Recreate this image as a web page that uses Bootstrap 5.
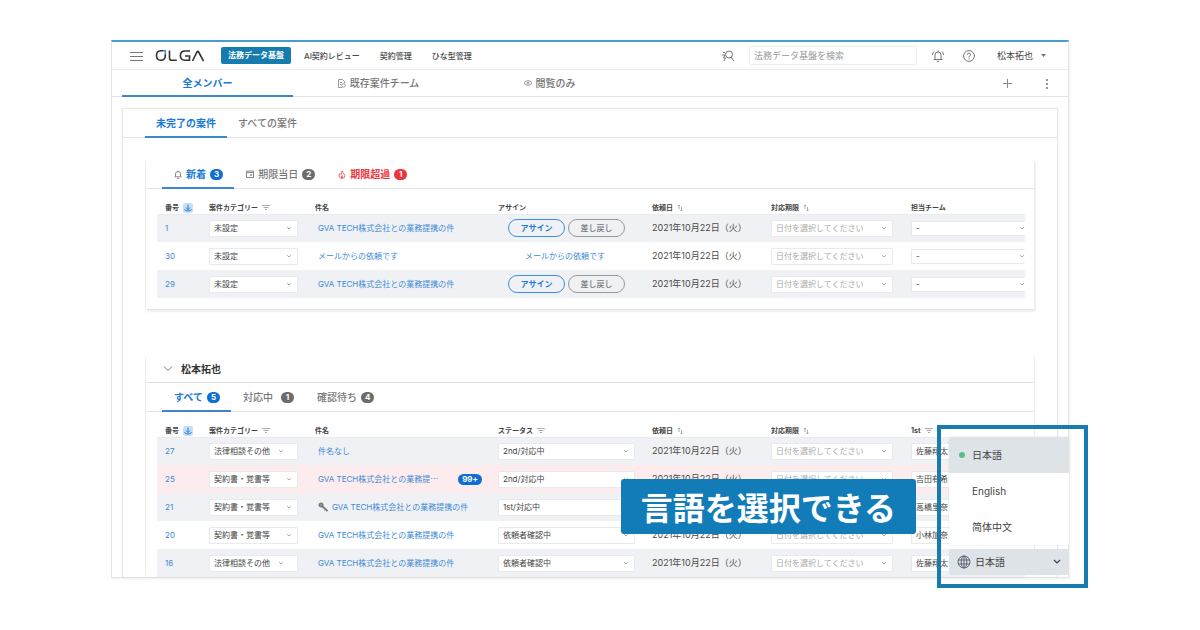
<!DOCTYPE html>
<html lang="ja">
<head>
<meta charset="utf-8">
<meta name="viewport" content="width=device-width, initial-scale=1">
<title>OLGA 法務データ基盤</title>
<link href="https://cdn.jsdelivr.net/npm/bootstrap@5.3.0/dist/css/bootstrap.min.css" rel="stylesheet">
<style>
:root{--blue:#1a7ad9;--line:#e2e4e7;--brand:#167cb0}
body{font-family:Inter,"Noto Sans CJK JP",sans-serif;font-size:8px;line-height:12px;color:#4a4a4a;background:#fff}
svg{display:block;flex:none}
a{text-decoration:none;color:inherit}
button{font-family:inherit}
.page{padding:40px 131px 40px 111px}
.app{border:1px solid var(--line);border-top:2px solid #459dd3;box-shadow:1px 1px 3px #0001}
.topbar{height:28px;border-bottom:1px solid #ececee;padding:0 22px 0 18px;font-weight:500}
.iconbtn{border:0;background:none;padding:0;color:#777}
.chip{background:var(--brand);color:#fff;border-radius:2px;padding:2px 7px;height:17px;line-height:13px;font-weight:700}
.menus{gap:20px;margin-left:16px}
.menus .chip{margin-right:-7px}
.finder{width:168px;height:19px;min-height:0;border:1px solid #eee;border-radius:1px;font-size:9px;padding:0 4px;line-height:17px}
.finder::placeholder{color:#999}
.tools{gap:15px}
.user{font-size:9px;color:#444;margin-left:7px}
.tabline{border-bottom:1px solid var(--line);font-size:10px;line-height:14px;font-weight:500;color:#777}
.tabline .nav-link{color:inherit;border-bottom:2px solid transparent;border-radius:0;padding:0 11px;display:flex;align-items:center;gap:4px;margin-bottom:-1px}
.tabline .nav-link.active{color:var(--blue);border-color:#3b87cb;font-weight:700}
.tabline .nav-link.late{color:#f0353d;font-weight:700}
.teams{height:27px;padding:0 10px}
.teams .nav-link{width:171px;justify-content:center;padding-top:1px}
.inset{height:29px;padding:0 22px}
.counts{padding:0 16px}
.counts .nav-link{padding:1px 11px 0 12px}
.sheet{margin:11px 10px 0;border:1px solid #e6e7e9;border-bottom:0;box-shadow:0 0 2px #0001}
.panel{margin:0 22px;border:1px solid #eceded;border-top:0;border-bottom:0;border-radius:2px}
.panel-shut{border-bottom:1px solid #e4e5e6;padding-bottom:11px;box-shadow:1px 2px 2px #0001}
.fresh{margin-top:22px}
.mine{margin-top:46px}
.pill{--bs-badge-font-size:8px;--bs-badge-padding-x:4px;--bs-badge-padding-y:1px;line-height:9px;min-width:13px;background:#6c6c6c}
.active .pill,.pill.on{background:#0f6fd0}
.late .pill{background:#ee343c}
.owner{height:27px;font-size:10px;font-weight:700;color:#333;border-bottom:1px solid var(--line);padding:0 17px;width:100%;text-align:left}
.scroller{padding:0 9px 0 11px}
.cases{table-layout:fixed;width:100%;margin:0;font-size:8px}
.cases th{height:25px;padding:0 8px 1px;vertical-align:bottom;font-size:7px;line-height:10px;font-weight:700;color:#444;white-space:nowrap}
.cases td{height:28px;padding:0 8px;vertical-align:middle;white-space:nowrap}
.cases tr.gray{background:#eff1f4}
.cases tr.rose{background:#fdecee}
.cases thead{border-bottom:1px solid #e9ebee}
.cases td a{color:#3d8ad6}
.cases .c-name{padding-left:11px}
.cases .c-day{font-size:9px}
.c-no{width:44px}.c-cat{width:106px}.c-act{width:154px}.c-date{width:119px}.c-due{width:140px}.c-team{width:122px}
.sorted{background:#c5e1f8;border-radius:2px;color:#1a72c4}
.pick{--bs-form-select-bg-img:url("data:image/svg+xml,%3csvg xmlns='http://www.w3.org/2000/svg' viewBox='0 0 8 8'%3e%3cpath d='M1.5 3 4 5.3 6.500 3' fill='none' stroke='%23999' stroke-width='1.100'/%3e%3c/svg%3e");background-size:6px 6px;background-position:right 5px center;height:17px;min-height:0;padding:0 14px 0 4px;border:1px solid #e8eaed;border-radius:1px;font-size:8px;line-height:14px;color:#444;background-color:#fff}
.pick.cat{width:89px}
.pick.near{background-position:right 13px center}
.pick.due{width:122px;color:#aaa}
.pick.state{width:137px}
.pick.team{width:auto;min-width:100%;border-right:0;background-position:right 0 center}
.pick.slim{height:15px;line-height:12px}
.cases .c-team{padding-right:0}
.acts{gap:3px;padding-left:10px}
.act{--bs-btn-font-size:8px;--bs-btn-padding-x:0;--bs-btn-padding-y:0;--bs-btn-line-height:15px;--bs-btn-border-radius:9px;width:57px;height:18px}
.act-go{--bs-btn-color:#1a7ad9;--bs-btn-border-color:#3b8de0;--bs-btn-font-weight:700}
.act-back{--bs-btn-color:#777;--bs-btn-border-color:#999;--bs-btn-font-weight:500}
.mailed{padding-left:27px}
.callout{position:absolute;right:153px;bottom:44px;background:#127cb9;color:#fff;font:700 32px/55px "Noto Sans CJK JP",sans-serif;padding:0 20px;border-radius:3px;white-space:nowrap}
.spot{position:absolute;right:-19px;bottom:-10px;border:4px solid var(--brand);padding:8px 15px 9px 8px}
.langs{width:120px;background:#fff;box-shadow:0 0 2px #0002;font-size:10px;margin-bottom:4px;border-radius:2px}
.langs .list-group-item{border:0;height:36px;line-height:14px;padding:0 10px;color:#444;background:#fff;gap:7px;display:flex;align-items:center}
.langs .list-group-item.now{background:#dee3e7}
.dot{width:6px;height:6px;border-radius:50%}
.now .dot{background:#5bbd8b}
.langbar{width:120px;height:26px;border:0;border-radius:2px;background:#dee3e7;font-size:10px;color:#444;padding:0 8px}
</style>
</head>
<body>
<svg width="0" height="0" class="position-absolute" aria-hidden="true">
 <defs>
  <g id="sort" fill="none" stroke="#999"><path d="M2 5V1L.8 2.200M2 1l1.200 1.200M4.500 3v4L3.300 5.800M4.500 7l1.200-1.200" stroke-width=".8"/></g>
  <g id="filter" stroke="#aaa" stroke-width="1"><path d="M0 1.500h8M1.500 3.500h5M3 5.500h2"/></g>
  <g id="down" fill="none" stroke="currentColor" stroke-width=".9"><path d="M5 1.500v5M3 4.500l2 2 2-2M1.500 6q.5 2 3.500 2t3.500-2"/></g>
 </defs>
</svg>
<main class="page">
<div class="position-relative">
 <div class="app">
  <header class="topbar d-flex align-items-center">
   <button class="iconbtn" aria-label="メニュー"><svg width="13" height="10" stroke="#777" stroke-width="1"><path d="M0 1.500h13M0 5.500h13M0 9.500h13"/></svg></button>
   <a href="#" class="ms-2 ps-1" aria-label="OLGA"><svg width="50" height="13" viewBox="0 0 50 13" fill="none" stroke="#333" stroke-width="1.600"><path d="M8 1.800H5.500Q1.500 2 1.500 6.500t4.300 4.800q4.500-.2 4.500-4.800V4.500"/><path d="M8 1.800h2.300V4" stroke="#2b9be0"/><path d="M14.500 1.500V9q0 2.300 2.300 2.300h5M35 2h-5q-4.600 0-4.600 4.600t4.600 4.700H34.500V7H30M37.500 12 42 3q.8-1.200 1.600 0L48.500 12"/></svg></a>
   <nav class="menus d-flex align-items-center flex-grow-1">
    <a href="#" class="chip">法務データ基盤</a>
    <a href="#">AI契約レビュー</a>
    <a href="#">契約管理</a>
    <a href="#">ひな型管理</a>
   </nav>
   <div class="tools d-flex align-items-center">
    <button class="iconbtn" aria-label="詳細検索"><svg width="12" height="12" fill="none" stroke="currentColor"><circle cx="7" cy="4.500" r="3.500"/><path d="m9 7 3 4M1 2.500h2M0 5h3L1.500 8h2L2 11"/></svg></button>
    <input class="form-control finder" type="search" placeholder="法務データ基盤を検索" aria-label="法務データ基盤を検索">
    <button class="iconbtn" aria-label="通知"><svg width="12" height="12" fill="none" stroke="currentColor"><path d="M3 9.500V5q0-3 3-3t3 3v4.500M1.500 9.500h9M5 11.300h2M6 2V.5M.3 5l.5-2L2 1.500M11.700 5l-.5-2L10 1.500"/></svg></button>
    <button class="iconbtn ms-1" aria-label="ヘルプ"><svg width="12" height="12" fill="none" stroke="currentColor"><circle cx="6" cy="6" r="5.400"/><path d="M4.300 4.800Q4.500 3.200 6 3.200t1.700 1.500Q7.700 5.500 6 6.500v.8M6 8.300v1"/></svg></button>
    <button class="iconbtn user d-flex align-items-center gap-2"><span>松本拓也</span><svg width="5" height="3"><path d="M0 0h5L2.500 3Z" fill="#777"/></svg></button>
   </div>
  </header>
  <div class="teams tabline d-flex">
   <nav class="d-flex flex-grow-1">
    <a href="#" class="nav-link active">全メンバー</a>
    <a href="#" class="nav-link"><svg width="8" height="9" fill="none" stroke="#999"><path d="M4 8.500H.5v-8h4l2 2V4M2 3.500h2M2 5.500h1"/><circle cx="5.500" cy="6.500" r="1.700"/></svg>既存案件チーム</a>
    <a href="#" class="nav-link"><svg width="8" height="6" fill="none" stroke="#999"><ellipse cx="4" cy="3" rx="3.500" ry="2.300"/><circle cx="4" cy="3" r="1"/></svg>閲覧のみ</a>
   </nav>
   <button class="iconbtn me-4" aria-label="追加"><svg width="12" height="10" stroke="#888"><path d="M2 5.500h9M6.500 1v9"/></svg></button>
   <button class="iconbtn ms-2 me-2" aria-label="その他"><svg width="5" height="11" fill="#777"><circle cx="2" cy="2" r="1"/><circle cx="2" cy="6" r="1"/><circle cx="2" cy="10" r="1"/></svg></button>
  </div>

  <div class="sheet">
   <nav class="inset tabline d-flex">
    <a href="#" class="nav-link active">未完了の案件</a>
    <a href="#" class="nav-link">すべての案件</a>
   </nav>

   <section class="panel panel-shut fresh">
    <nav class="inset counts tabline d-flex">
     <a href="#" class="nav-link active"><svg width="8" height="9" fill="none" stroke="#888"><path d="M1.500 6.500V4q0-2.500 2.500-2.500T6.500 4v2.500M.5 6.800h7M3 8.300h2M4 1.500v-1"/></svg>新着<span class="badge rounded-pill pill">3</span></a>
     <a href="#" class="nav-link"><svg width="8" height="8" fill="none" stroke="#888"><path d="M.5 1h7v6.500h-7ZM.5 2.500h7M4.500 4.500h1v1h-1Z"/></svg>期限当日<span class="badge rounded-pill pill">2</span></a>
     <a href="#" class="nav-link late"><svg width="8" height="9" fill="none" stroke="#f0606a"><path d="M4 .8Q4.500 2.500 6 4t.5 3Q5.500 8.500 4 8.500T1.500 7Q.5 5 2 3.500l1 1Q4 3 4 .8ZM4 8.500Q2.800 7 4 5.500 5.200 7 4 8.500"/></svg>期限超過<span class="badge rounded-pill pill">1</span></a>
    </nav>
    <div class="scroller">
     <table class="cases">
      <thead><tr>
       <th class="c-no"><span class="d-flex align-items-center gap-1">番号 <svg class="sorted" width="10" height="10"><use href="#down"/></svg></span></th>
       <th class="c-cat"><span class="d-flex align-items-center gap-1">案件カテゴリー <svg width="8" height="7"><use href="#filter"/></svg></span></th>
       <th>件名</th>
       <th class="c-act">アサイン</th>
       <th class="c-date"><span class="d-flex align-items-center gap-1">依頼日 <svg width="7" height="8"><use href="#sort"/></svg></span></th>
       <th class="c-due"><span class="d-flex align-items-center gap-1">対応期限 <svg width="7" height="8"><use href="#sort"/></svg></span></th>
       <th class="c-team">担当チーム</th>
      </tr></thead>
      <tbody>
       <tr class="gray">
        <td><a href="#">1</a></td>
        <td><select class="form-select pick cat" aria-label="案件カテゴリー"><option>未設定</option></select></td>
        <td class="c-name"><a href="#">GVA TECH株式会社との業務提携の件</a></td>
        <td><div class="acts d-flex"><button class="btn act act-go">アサイン</button><button class="btn act act-back">差し戻し</button></div></td>
        <td class="c-day">2021年10月22日（火）</td>
        <td><select class="form-select pick due" aria-label="対応期限"><option>日付を選択してください</option></select></td>
        <td class="c-team"><select class="form-select pick team slim" aria-label="担当チーム"><option>-</option></select></td>
       </tr>
       <tr>
        <td><a href="#">30</a></td>
        <td><select class="form-select pick cat" aria-label="案件カテゴリー"><option>未設定</option></select></td>
        <td class="c-name"><a href="#">メールからの依頼です</a></td>
        <td><a href="#" class="mailed">メールからの依頼です</a></td>
        <td class="c-day">2021年10月22日（火）</td>
        <td><select class="form-select pick due" aria-label="対応期限"><option>日付を選択してください</option></select></td>
        <td class="c-team"><select class="form-select pick team slim" aria-label="担当チーム"><option>-</option></select></td>
       </tr>
       <tr class="gray">
        <td><a href="#">29</a></td>
        <td><select class="form-select pick cat" aria-label="案件カテゴリー"><option>未設定</option></select></td>
        <td class="c-name"><a href="#">GVA TECH株式会社との業務提携の件</a></td>
        <td><div class="acts d-flex"><button class="btn act act-go">アサイン</button><button class="btn act act-back">差し戻し</button></div></td>
        <td class="c-day">2021年10月22日（火）</td>
        <td><select class="form-select pick due" aria-label="対応期限"><option>日付を選択してください</option></select></td>
        <td class="c-team"><select class="form-select pick team slim" aria-label="担当チーム"><option>-</option></select></td>
       </tr>
      </tbody>
     </table>
    </div>
   </section>

   <section class="panel mine">
    <button class="owner iconbtn d-flex align-items-center gap-2 border-bottom"><svg width="10" height="6" fill="none" stroke="#777"><path d="m1 .5 4 4 4-4"/></svg>松本拓也</button>
    <nav class="inset counts tabline d-flex">
     <a href="#" class="nav-link active">すべて<span class="badge rounded-pill pill">5</span></a>
     <a href="#" class="nav-link">対応中<span class="badge rounded-pill pill ms-1">1</span></a>
     <a href="#" class="nav-link">確認待ち<span class="badge rounded-pill pill">4</span></a>
    </nav>
    <div class="scroller">
     <table class="cases">
      <thead><tr>
       <th class="c-no"><span class="d-flex align-items-center gap-1">番号 <svg class="sorted" width="10" height="10"><use href="#down"/></svg></span></th>
       <th class="c-cat"><span class="d-flex align-items-center gap-1">案件カテゴリー <svg width="8" height="7"><use href="#filter"/></svg></span></th>
       <th>件名</th>
       <th class="c-act"><span class="d-flex align-items-center gap-1">ステータス <svg width="8" height="7"><use href="#filter"/></svg></span></th>
       <th class="c-date"><span class="d-flex align-items-center gap-1">依頼日 <svg width="7" height="8"><use href="#sort"/></svg></span></th>
       <th class="c-due"><span class="d-flex align-items-center gap-1">対応期限 <svg width="7" height="8"><use href="#sort"/></svg></span></th>
       <th class="c-team"><span class="d-flex align-items-center gap-1">1st <svg width="8" height="7"><use href="#filter"/></svg></span></th>
      </tr></thead>
      <tbody>
       <tr class="gray">
        <td><a href="#">27</a></td>
        <td><select class="form-select pick cat near" aria-label="案件カテゴリー"><option>法律相談その他</option></select></td>
        <td class="c-name"><a href="#">件名なし</a></td>
        <td><select class="form-select pick state" aria-label="ステータス"><option>2nd/対応中</option></select></td>
        <td class="c-day">2021年10月22日（火）</td>
        <td><select class="form-select pick due" aria-label="対応期限"><option>日付を選択してください</option></select></td>
        <td class="c-team"><select class="form-select pick team" aria-label="1st"><option>佐藤翔太</option></select></td>
       </tr>
       <tr class="rose">
        <td><a href="#">25</a></td>
        <td><select class="form-select pick cat" aria-label="案件カテゴリー"><option>契約書・覚書等</option></select></td>
        <td class="c-name"><div class="d-flex align-items-center justify-content-between"><a href="#">GVA TECH株式会社との業務提⋯</a><span class="badge rounded-pill pill on">99+</span></div></td>
        <td><select class="form-select pick state" aria-label="ステータス"><option>2nd/対応中</option></select></td>
        <td class="c-day">2021年10月22日（火）</td>
        <td><select class="form-select pick due" aria-label="対応期限"><option>日付を選択してください</option></select></td>
        <td class="c-team"><select class="form-select pick team" aria-label="1st"><option>吉田有希</option></select></td>
       </tr>
       <tr class="gray">
        <td><a href="#">21</a></td>
        <td><select class="form-select pick cat" aria-label="案件カテゴリー"><option>契約書・覚書等</option></select></td>
        <td class="c-name"><a href="#" class="d-flex align-items-center gap-1"><svg width="10" height="10"><path d="m4 4 5.500 5" stroke="#777" stroke-width="1.800"/><path d="m6.500 8.500 1.500-1.500" stroke="#777"/><circle cx="3" cy="3" r="1.800" fill="#999" stroke="#777" stroke-width="1.400"/></svg>GVA TECH株式会社との業務提携の件</a></td>
        <td><select class="form-select pick state" aria-label="ステータス"><option>1st/対応中</option></select></td>
        <td class="c-day">2021年10月22日（火）</td>
        <td><select class="form-select pick due" aria-label="対応期限"><option>日付を選択してください</option></select></td>
        <td class="c-team"><select class="form-select pick team" aria-label="1st"><option>高橋里奈</option></select></td>
       </tr>
       <tr>
        <td><a href="#">20</a></td>
        <td><select class="form-select pick cat" aria-label="案件カテゴリー"><option>契約書・覚書等</option></select></td>
        <td class="c-name"><a href="#">GVA TECH株式会社との業務提携の件</a></td>
        <td><select class="form-select pick state" aria-label="ステータス"><option>依頼者確認中</option></select></td>
        <td class="c-day">2021年10月22日（火）</td>
        <td><select class="form-select pick due" aria-label="対応期限"><option>日付を選択してください</option></select></td>
        <td class="c-team"><select class="form-select pick team" aria-label="1st"><option>小林加奈</option></select></td>
       </tr>
       <tr class="gray">
        <td><a href="#">16</a></td>
        <td><select class="form-select pick cat near" aria-label="案件カテゴリー"><option>法律相談その他</option></select></td>
        <td class="c-name"><a href="#">GVA TECH株式会社との業務提携の件</a></td>
        <td><select class="form-select pick state" aria-label="ステータス"><option>依頼者確認中</option></select></td>
        <td class="c-day">2021年10月22日（火）</td>
        <td><select class="form-select pick due" aria-label="対応期限"><option>日付を選択してください</option></select></td>
        <td class="c-team"><select class="form-select pick team" aria-label="1st"><option>佐藤翔太</option></select></td>
       </tr>
      </tbody>
     </table>
    </div>
   </section>
  </div>
 </div>

 <div class="callout">言語を選択できる</div>
 <div class="spot">
  <div class="langs list-group">
   <button class="list-group-item list-group-item-action now"><span class="dot"></span>日本語</button>
   <button class="list-group-item list-group-item-action"><span class="dot"></span>English</button>
   <button class="list-group-item list-group-item-action" lang="zh-CN"><span class="dot"></span>简体中文</button>
  </div>
  <button class="langbar d-flex align-items-center gap-1" aria-expanded="true"><svg width="14" height="14" fill="none" stroke="#5a6270"><circle cx="7" cy="7" r="6"/><ellipse cx="7" cy="7" rx="2.800" ry="6"/><path d="M7 1v12M1.300 5h11.400M1.300 9h11.400"/></svg><span class="me-auto">日本語</span><svg width="8" height="6" fill="none" stroke="#444" stroke-width="1.200"><path d="m1 1 3 3 3-3"/></svg></button>
 </div>
</div>
</main>
<script src="https://cdn.jsdelivr.net/npm/bootstrap@5.3.0/dist/js/bootstrap.bundle.min.js"></script>
</body>
</html>
